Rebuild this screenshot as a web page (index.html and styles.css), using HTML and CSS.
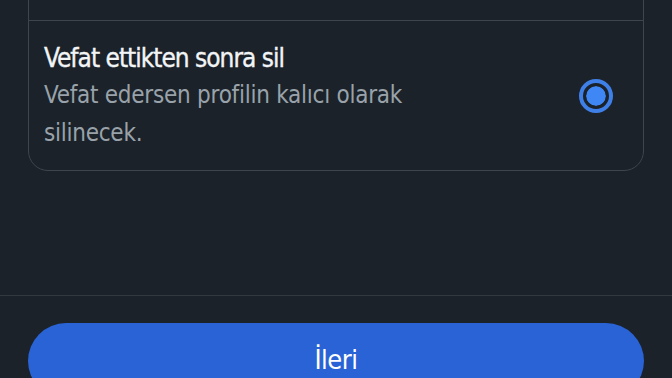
FILE: index.html
```html
<html lang="tr">
    <head>
        <meta charset="UTF-8">
        <meta name="viewport" content="width=device-width, initial-scale=1.0">
        <title>Hesap ayarları</title>
        <link rel="stylesheet" href="styles.css">
    </head>
    <body>
        <div class="screen">
            <div class="options">
                <div class="option option-prev">
                    <div class="option-text">
                        <p class="option-title">Anı hesabına dönüştür</p>
                        <p class="option-desc">Profilin anı hesabı olarak kalacak.</p>
                    </div>
                </div>
                <label class="option" for="delete">
                    <div class="option-text">
                        <p class="option-title">Vefat ettikten sonra sil</p>
                        <p class="option-desc">Vefat edersen profilin kalıcı olarak silinecek.</p>
                    </div>
                    <input type="radio" name="choice" id="delete" checked>
                    <span class="radio"></span>
                </label>
            </div>
        </div>
        <div class="footer">
            <button type="button">İleri</button>
        </div>
    </body>
</html>
```

FILE: styles.css
```css
* {
    margin: 0;
    padding: 0;
    box-sizing: border-box;
}

body {
    background-color: #1b2229;
    font-family: "DejaVu Sans Condensed", "Liberation Sans", sans-serif;
    overflow: hidden;
}

.screen {
    display: flow-root;
    height: 295px;
    padding: 0 28px;
}

.options {
    margin-top: -100px;
    border: 1px solid #3d454d;
    border-radius: 20px;
}

.option {
    display: flex;
    align-items: center;
    justify-content: space-between;
    padding: 19px 30px 18px 15px;
    cursor: pointer;

    input {
        display: none;
    }
}

.option-prev {
    height: 120px;
    padding-top: 0;
    align-items: flex-start;
    border-bottom: 1px solid #3d454d;
}

.option-text {
    max-width: 450px;
}

.option-title {
    color: #f2f4f6;
    font-size: 26px;
    line-height: 36px;
    letter-spacing: -1px;
    -webkit-text-stroke: 0.35px #f2f4f6;
}

.option-desc {
    color: #99a2aa;
    font-size: 24px;
    line-height: 38px;
    letter-spacing: -0.25px;
}

.radio {
    flex-shrink: 0;
    width: 34px;
    height: 34px;
    border-radius: 50%;
    border: 4px solid #3f80e8;
    padding: 3px;
    background-color: #3f87f5;
    background-clip: content-box;
    box-shadow: inset 0 0 0 3px #1b2229;
}

.footer {
    border-top: 1px solid #32393f;
    padding: 27px 28px 0;
}

button {
    width: 100%;
    height: 76px;
    border: none;
    border-radius: 38px;
    background-color: #2a63d5;
    color: #ffffff;
    font-family: inherit;
    font-size: 27px;
    letter-spacing: -0.5px;
    padding-bottom: 4px;
    cursor: pointer;
}
```
